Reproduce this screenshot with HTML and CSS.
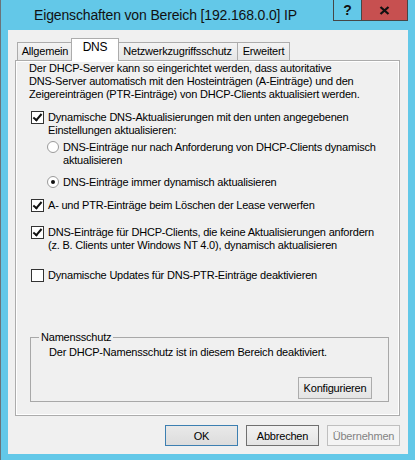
FILE: index.html
```html
<!DOCTYPE html>
<html lang="de">
<head>
    <meta charset="UTF-8">
    <title>Eigenschaften von Bereich [192.168.0.0] IP</title>
    <link rel="stylesheet" href="styles.css">
</head>
<body>
    <div class="window">
        <div class="titlebar">
            <div class="title">Eigenschaften von Bereich [192.168.0.0] IP</div>
            <div class="caption-buttons">
                <div class="cap-btn help">?</div>
                <div class="cap-btn close">
                    <svg width="11" height="9" viewBox="0 0 11 9">
                        <path d="M1.5 1 L9.5 8 M9.5 1 L1.5 8" stroke="#111" stroke-width="2.3" fill="none"/>
                    </svg>
                </div>
            </div>
        </div>

        <div class="client">
            <div class="tabs">
                <div class="tab tab-general">Allgemein</div>
                <div class="tab active">DNS</div>
                <div class="tab tab-nap">Netzwerkzugriffsschutz</div>
                <div class="tab tab-advanced">Erweitert</div>
            </div>

            <div class="page">
                <p class="intro">Der DHCP-Server kann so eingerichtet werden, dass autoritative<br>DNS-Server automatisch mit den Hosteinträgen (A-Einträge) und den<br>Zeigereinträgen (PTR-Einträge) von DHCP-Clients aktualisiert werden.</p>

                <div class="option opt-dyn">
                    <span class="check checked"></span>
                    <span class="label">Dynamische DNS-Aktualisierungen mit den unten angegebenen<br>Einstellungen aktualisieren:</span>
                </div>

                <div class="option radio-row radio-first">
                    <span class="radio"></span>
                    <span class="label">DNS-Einträge nur nach Anforderung von DHCP-Clients dynamisch<br>aktualisieren</span>
                </div>

                <div class="option radio-row radio-second">
                    <span class="radio selected"></span>
                    <span class="label">DNS-Einträge immer dynamisch aktualisieren</span>
                </div>

                <div class="option opt-lease">
                    <span class="check checked"></span>
                    <span class="label">A- und PTR-Einträge beim Löschen der Lease verwerfen</span>
                </div>

                <div class="option opt-legacy">
                    <span class="check checked"></span>
                    <span class="label">DNS-Einträge für DHCP-Clients, die keine Aktualisierungen anfordern<br>(z. B. Clients unter Windows NT 4.0), dynamisch aktualisieren</span>
                </div>

                <div class="option opt-ptr">
                    <span class="check"></span>
                    <span class="label">Dynamische Updates für DNS-PTR-Einträge deaktivieren</span>
                </div>

                <fieldset class="groupbox">
                    <legend>Namensschutz</legend>
                    <div class="group-text">Der DHCP-Namensschutz ist in diesem Bereich deaktiviert.</div>
                    <div class="group-actions">
                        <button class="btn btn-config">Konfigurieren</button>
                    </div>
                </fieldset>
            </div>

            <div class="actions">
                <button class="btn btn-default">OK</button>
                <button class="btn btn-cancel">Abbrechen</button>
                <button class="btn" disabled>Übernehmen</button>
            </div>
        </div>
    </div>
</body>
</html>
```

FILE: styles.css
```css
* {
    margin: 0;
    padding: 0;
    box-sizing: border-box;
}

body {
    font-family: "Liberation Sans", Arial, sans-serif;
    font-size: 11px;
    letter-spacing: -0.2px;
    color: #000;
    background: #63c8e8;
}

.window {
    width: 415px;
    height: 460px;
    background: #63c8e8;
    border-left: 1px solid #6b7479;
    padding: 0 7px 6px 7px;
    display: flex;
    flex-direction: column;
}

/* Titelleiste */
.titlebar {
    height: 30px;
    display: flex;
    align-items: flex-start;
}

.title {
    flex: 1;
    padding-left: 26px;
    padding-top: 6px;
    font-size: 14px;
    letter-spacing: -0.15px;
    line-height: 18px;
    color: #111;
    white-space: nowrap;
}

.caption-buttons {
    display: flex;
}

.cap-btn {
    height: 21px;
    border: 1px solid #464646;
    border-top: none;
    display: flex;
    align-items: center;
    justify-content: center;
}

.help {
    width: 29px;
    font-weight: bold;
    font-size: 14px;
    color: #111;
}

.close {
    width: 46px;
    border-left: none;
    background: #c75050;
}

/* Fensterinhalt */
.client {
    flex: 1;
    background: #f0f0f0;
    display: flex;
    flex-direction: column;
}

.tabs {
    height: 30px;
    padding-left: 9px;
    display: flex;
    align-items: flex-end;
    position: relative;
    z-index: 1;
}

.tab {
    height: 18px;
    border: 1px solid #acacac;
    border-bottom: none;
    margin-left: -1px;
    background: linear-gradient(#f3f3f3, #e6e6e6);
    line-height: 17px;
    text-align: center;
}

.tab-general {
    width: 56px;
    margin-left: 0;
}

.tab-nap {
    width: 121px;
}

.tab-advanced {
    width: 53px;
}

.tab.active {
    width: 48px;
    height: 23px;
    margin: 0 -1px -1px -2px;
    background: #fff;
    font-size: 12px;
    line-height: 16px;
    position: relative;
}

.page {
    height: 356px;
    margin: 0 8px 0 7px;
    border: 1px solid #acacac;
    box-shadow: inset 1px 1px 0 #fff, inset -1px -1px 0 #fff;
    padding: 1px 10px 13px 13px;
    display: flex;
    flex-direction: column;
    line-height: 13px;
}

.intro {
    white-space: nowrap;
}

.option {
    display: flex;
    align-items: flex-start;
    white-space: nowrap;
}

.check {
    flex: none;
    width: 13px;
    height: 13px;
    margin: 0 4px 0 2px;
    border: 1px solid #333;
    background: #fff;
    position: relative;
}

.check.checked::after {
    content: "";
    position: absolute;
    left: 3px;
    top: 0px;
    width: 3px;
    height: 7px;
    border: solid #111;
    border-width: 0 2px 2px 0;
    transform: rotate(40deg);
}

.radio-row {
    padding-left: 18px;
}

.radio {
    flex: none;
    width: 12px;
    height: 12px;
    margin: 0 4px 0 0;
    border: 1px solid #9a9a9a;
    border-radius: 50%;
    background: #fff;
    position: relative;
}

.radio.selected::after {
    content: "";
    position: absolute;
    left: 3px;
    top: 3px;
    width: 4px;
    height: 4px;
    border-radius: 50%;
    background: #111;
}

.opt-dyn { margin-top: 10px; }
.radio-first { margin-top: 4px; }
.radio-second { margin-top: 9px; }
.opt-lease { margin-top: 10px; }
.opt-legacy { margin-top: 14px; }
.opt-ptr { margin-top: 17px; }

.groupbox {
    margin: auto 0 0 1px;
    border: 1px solid #a8a8a8;
    padding: 0 16px 2px 18px;
    min-inline-size: 0;
}

.groupbox legend {
    margin-left: -10px;
    padding: 0 2px;
    line-height: 13px;
}

.group-text {
    margin-top: 2px;
}

.group-actions {
    display: flex;
    justify-content: flex-end;
    margin-top: 18px;
}

/* Schaltflächen */
.btn {
    font-family: "Liberation Sans", Arial, sans-serif;
    font-size: 11px;
    letter-spacing: -0.2px;
    color: #000;
    height: 21px;
    border: 1px solid #acacac;
    background: linear-gradient(#f2f2f2, #e4e4e4);
}

.btn-config {
    width: 74px;
    height: 22px;
}

.actions {
    display: flex;
    justify-content: flex-end;
    gap: 8px;
    padding-right: 8px;
    margin-top: 9px;
}

.actions .btn {
    width: 73px;
}

.btn-default {
    border-color: #3c7fb1;
    background: linear-gradient(#e9e9e9, #dcdcdc);
}

.btn-cancel {
    border-color: #707070;
}

.btn:disabled {
    color: #838383;
    border-color: #bfbfbf;
    background: #f4f4f4;
}
```
